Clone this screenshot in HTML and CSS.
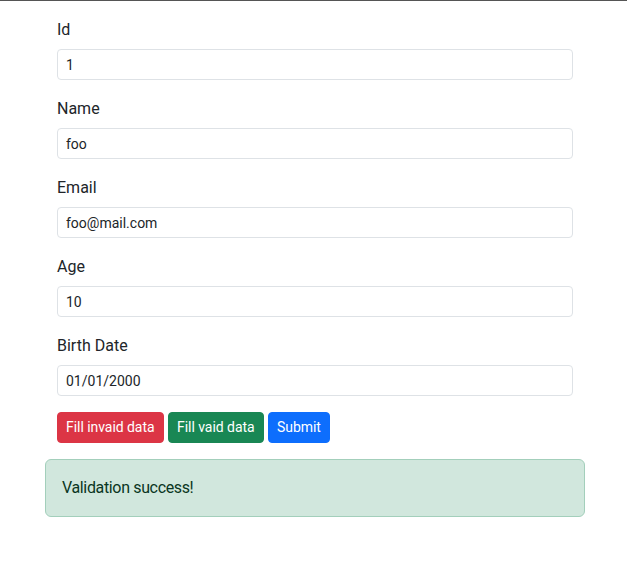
FILE: index.html
```html
<!DOCTYPE html>
<html lang="en">
<head>
<meta charset="utf-8">
<title>Form</title>
<link rel="stylesheet" href="styles.css">
</head>
<body>
<div class="container">
  <form class="form">
    <div class="field">
      <label class="form-label" for="id">Id</label>
      <input class="form-control" id="id" type="text" value="1">
    </div>
    <div class="field">
      <label class="form-label" for="name">Name</label>
      <input class="form-control" id="name" type="text" value="foo">
    </div>
    <div class="field">
      <label class="form-label" for="email">Email</label>
      <input class="form-control" id="email" type="text" value="foo@mail.com">
    </div>
    <div class="field">
      <label class="form-label" for="age">Age</label>
      <input class="form-control" id="age" type="text" value="10">
    </div>
    <div class="field">
      <label class="form-label" for="birth">Birth Date</label>
      <input class="form-control" id="birth" type="text" value="01/01/2000">
    </div>
    <div class="buttons">
      <button type="button" class="btn btn-danger">Fill invaid data</button>
      <button type="button" class="btn btn-success">Fill vaid data</button>
      <button type="button" class="btn btn-primary">Submit</button>
    </div>
  </form>
  <div class="alert">Validation success!</div>
</div>
</body>
</html>
```
FILE: styles.css
```css
* { box-sizing: border-box; }
html, body { margin: 0; padding: 0; background: #fff; }
body {
  border-top: 1px solid #555;
  font-family: Roboto, "Segoe UI", sans-serif;
  font-size: 16px;
  line-height: 24px;
  color: #212529;
}
.container {
  width: 540px;
  margin-left: 45px;
  padding-top: 16px;
}
.form { padding: 0 12px; }
.field { margin-bottom: 16px; }
.form-label {
  display: block;
  margin-bottom: 8px;
  font-size: 16px;
  line-height: 25px;
  height: 24px;
}
.form-control {
  display: block;
  width: 100%;
  height: 31px;
  padding: 4px 8px;
  font-family: inherit;
  font-size: 14px;
  line-height: 21px;
  color: #212529;
  background: #fff;
  border: 1px solid #dee2e6;
  border-radius: 4px;
  margin: 0;
}
.buttons { display: flex; gap: 4.5px; }
.btn {
  font-family: inherit;
  font-size: 14px;
  line-height: 21px;
  letter-spacing: -0.05px;
  padding: 4px 8px;
  border-radius: 4px;
  color: #fff;
  border: 1px solid transparent;
  height: 31px;
  margin: 0;
}
.btn-danger { background: #dc3545; border-color: #dc3545; }
.btn-success { background: #198754; border-color: #198754; }
.btn-primary { background: #0d6efd; border-color: #0d6efd; }
.alert {
  margin-top: 16px;
  padding: 16px;
  background: #d1e7dd;
  border: 1px solid #a3cfbb;
  border-radius: 6px;
  color: #0a3622;
  font-size: 16px;
  line-height: 24px;
  letter-spacing: -0.35px;
}
```
